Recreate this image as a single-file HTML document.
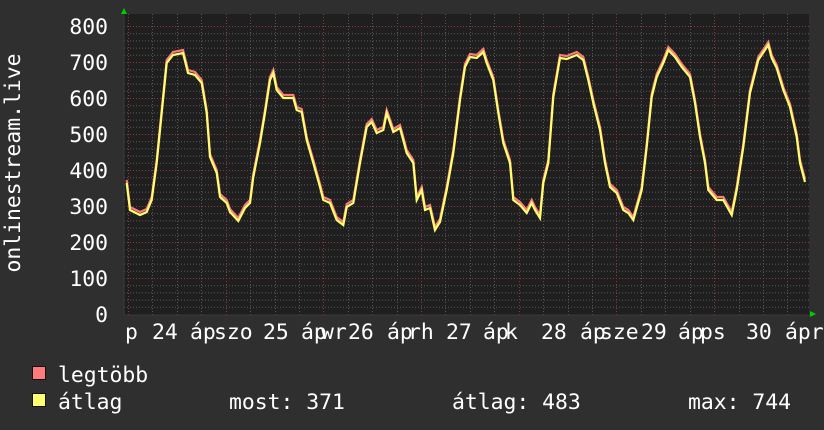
<!DOCTYPE html>
<html><head><meta charset="utf-8"><style>
html,body{margin:0;padding:0;background:#2f2f2f;}
svg{display:block}
text{font-family:"DejaVu Sans Mono","Liberation Mono",monospace;fill:#fff;font-size:21.4px}
</style></head><body>
<svg id="s" width="824" height="430" xmlns="http://www.w3.org/2000/svg">
<rect width="824" height="430" fill="#2f2f2f"/>
<rect x="124" y="14" width="685" height="301" fill="#1f1f1f"/>
<g id="grid"></g>
<line x1="124" y1="14" x2="124" y2="315" stroke="#3a3a3a"/>
<line x1="124" y1="315" x2="812" y2="315" stroke="#3a3a3a"/>
<polygon points="121,14 127,14 124,8" fill="#00cc00"/>
<polygon points="810,311 810,317 816,314" fill="#00cc00"/>
<g id="lines"></g>
<g text-anchor="end">
<text x="108" y="34">800</text><text x="108" y="70">700</text><text x="108" y="106">600</text>
<text x="108" y="142">500</text><text x="108" y="178">400</text><text x="108" y="214">300</text>
<text x="108" y="250">200</text><text x="108" y="286">100</text><text x="108" y="322">0</text>
</g>
<text transform="translate(20,163) rotate(-90)" text-anchor="middle">onlinestream.live</text>
<g>
<text x="125" y="339">p</text><text x="152" y="339">24</text><text x="190" y="339">áp</text><text x="214" y="339">szo</text>
<text x="263" y="339">25</text><text x="301" y="339">áp</text><text x="321" y="339">wr</text><text x="348" y="339">26</text>
<text x="387" y="339">áp</text><text x="408" y="339">rh</text><text x="446" y="339">27</text><text x="483" y="339">áp</text><text x="505" y="339">k</text>
<text x="541" y="339">28</text><text x="580" y="339">áp</text><text x="600" y="339">sze</text><text x="641" y="339">29</text>
<text x="678" y="339">áp</text><text x="700" y="339">ps</text><text x="746" y="339">30</text><text x="785" y="339">ápr</text>
</g>
<rect x="32.5" y="366.5" width="13" height="13" fill="#ff7b7b" stroke="#111"/>
<rect x="32.5" y="393.5" width="13" height="13" fill="#ffff70" stroke="#111"/>
<text x="58" y="382">legtöbb</text>
<text x="58" y="409">átlag</text>
<text x="229" y="409">most: 371</text>
<text x="452" y="409">átlag: 483</text>
<text x="688" y="409">max: 744</text>
</svg>
<script>
var NS="http://www.w3.org/2000/svg";
var g=document.getElementById('grid');
function ln(x1,y1,x2,y2,c){var l=document.createElementNS(NS,'line');l.setAttribute('x1',x1);l.setAttribute('y1',y1);l.setAttribute('x2',x2);l.setAttribute('y2',y2);l.setAttribute('stroke',c);l.setAttribute('stroke-dasharray','1,2');g.appendChild(l);}
for(var i=1;i<=40;i++){var y=314-i*7.2+0.5;ln(124,y,809,y,(i%5==0)?'#8a3c3c':'#5a5a5a');}
for(var k=0;;k++){var x=128+24.42*k;if(x>809)break;x=Math.round(x)+0.5;ln(x,14,x,315,(k%4==0)?'#8a3c3c':'#5a5a5a');}
var p=[[126.7,183],[130,210],[140,215],[146.7,212],[151.7,200],[156.7,163],[161.7,113],[166.7,63],[173,55],[183,53],[188,73],[195,75],[201.7,83],[206.7,113],[210,157],[216.7,173],[220,197],[226.7,203],[230,212],[238.3,221],[245,208],[250,203],[253.3,177],[260,143],[265,113],[270,80],[273.3,73],[276.7,90],[283.3,98],[293.3,98],[296.7,110],[301.7,112],[306.7,140],[313.3,163],[320,187],[323.3,200],[330,203],[336.7,220],[343.3,225],[346.7,207],[353.3,203],[360,163],[366.7,127],[371.7,122],[376.7,133],[383.3,130],[386.7,113],[393.3,132],[400,128],[406.7,153],[413.3,163],[416.7,200],[421.7,190],[425,210],[430,208],[435,230],[440,222],[446.7,190],[453.3,153],[460,100],[465,67],[470,57],[476.7,58],[483.3,52],[486.7,63],[493.3,80],[498.3,113],[503.3,143],[510,163],[513.3,200],[520,205],[526.7,213],[531.7,203],[535,210],[540,218],[543.3,183],[548.3,163],[553.3,97],[560,58],[566.7,59],[576.7,55],[583.3,60],[588.3,80],[593.3,103],[600,130],[605,163],[610,187],[616.7,193],[623.3,210],[628.3,213],[633.3,220],[641.7,190],[646.7,147],[651.7,97],[656.7,77],[663.3,63],[668.3,50],[675,57],[681.7,67],[690,77],[695,103],[700,137],[705,163],[708.3,190],[716.7,200],[723.3,200],[731.7,215],[736.7,190],[743.3,147],[750,93],[758.3,60],[768.3,45],[771.7,58],[776.7,68],[783.3,90],[790,107],[796.7,137],[800,163],[805,182]];
var L=document.getElementById('lines');
function pl(off,c){var e=document.createElementNS(NS,'polyline');e.setAttribute('points',p.map(function(a){return a[0]+','+(a[1]+off)}).join(' '));e.setAttribute('fill','none');e.setAttribute('stroke',c);e.setAttribute('stroke-width','2.2');e.setAttribute('stroke-linejoin','miter');L.appendChild(e);}
pl(-3,'#ff7b7b');pl(0,'#ffff70');
</script>
</body></html>
